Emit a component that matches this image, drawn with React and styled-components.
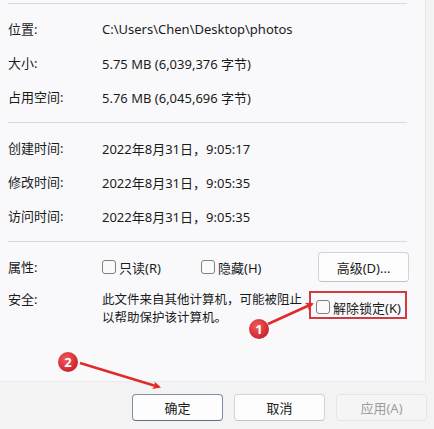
import styled, { createGlobalStyle } from "styled-components";

const Global = createGlobalStyle`
  html, body { margin: 0; padding: 0; }
  body {
    width: 434px;
    height: 429px;
    overflow: hidden;
    background: #f3f3f4;
    font-family: "Noto Sans", "Noto Sans CJK SC", sans-serif;
    font-size: 13px;
    color: #1b1b1b;
  }
`;

const info = [
  [["位置:", "C:\\Users\\Chen\\Desktop\\photos"], ["大小:", "5.75 MB (6,039,376 字节)"], ["占用空间:", "5.76 MB (6,045,696 字节)"]],
  [["创建时间:", "2022年8月31日，9:05:17"], ["修改时间:", "2022年8月31日，9:05:35"], ["访问时间:", "2022年8月31日，9:05:35"]],
];

export default function App() {
  return (
    <Page>
      <Global />
      <Panel>
        <Rule />
        {info.map((group, i) => (
          <div key={i}>
            <Section>
              {group.map(([k, v]) => (
                <Row key={k}>
                  <Label>{k}</Label>
                  <Value>{v}</Value>
                </Row>
              ))}
            </Section>
            <Rule />
          </div>
        ))}
        <Section>
          <Row>
            <Label>属性:</Label>
            <Attrs>
              <Check width="99px"><Box />只读(R)</Check>
              <Check><Box />隐藏(H)</Check>
              <Button wide>高级(D)...</Button>
            </Attrs>
          </Row>
          <Row top>
            <Label>安全:</Label>
            <Security>
              <Note>此文件来自其他计算机，可能被阻止<br />以帮助保护该计算机。</Note>
              <Highlight>
                <Check><Box />解除锁定(K)</Check>
              </Highlight>
            </Security>
          </Row>
        </Section>
      </Panel>
      <Footer>
        <Button primary>确定</Button>
        <Button>取消</Button>
        <Button disabled>应用(A)</Button>
      </Footer>
      <Marks viewBox="0 0 434 429">
        <defs>
          <radialGradient id="dot" cx="40%" cy="35%" r="70%">
            <stop offset="0" stopColor="#f25a5a" />
            <stop offset="1" stopColor="#c8202a" />
          </radialGradient>
          <marker id="head" markerWidth="8" markerHeight="8" refX="6" refY="4" orient="auto" markerUnits="userSpaceOnUse">
            <path d="M0 0 L8 4 L0 8 L2 4 Z" fill="#e02b2b" />
          </marker>
        </defs>
        <path d="M268 324 L312 304" stroke="#e02b2b" strokeWidth="2.5" fill="none" markerEnd="url(#head)" />
        <path d="M80 363 L159 387" stroke="#e02b2b" strokeWidth="2.5" fill="none" markerEnd="url(#head)" />
        <circle cx="259" cy="329" r="10" fill="url(#dot)" />
        <circle cx="68" cy="362" r="10" fill="url(#dot)" />
        <text x="259" y="334" textAnchor="middle" fill="#fff" fontSize="13" fontWeight="700" fontFamily="Noto Sans, sans-serif">1</text>
        <text x="68" y="367" textAnchor="middle" fill="#fff" fontSize="13" fontWeight="700" fontFamily="Noto Sans, sans-serif">2</text>
      </Marks>
    </Page>
  );
}

const Page = styled.div`
  position: relative;
  width: 434px;
  height: 429px;
  display: flex;
  flex-direction: column;
`;

const Panel = styled.div`
  width: 426px;
  height: 382px;
  box-sizing: border-box;
  padding: 3px 18px 0 8px;
  background: #f9f9fb;
  border-right: 1px solid #e8e8ea;
  border-bottom: 1px solid #ebebed;
`;

const Rule = styled.div`
  height: 1px;
  background: #d9d9db;
`;

const Section = styled.div`
  padding: 8px 0;
`;

const Row = styled.div`
  display: grid;
  grid-template-columns: 94px 1fr;
  align-items: ${(p) => (p.top ? "start" : "center")};
  min-height: 34px;
  padding-top: ${(p) => (p.top ? "6px" : "0")};
  box-sizing: border-box;
`;

const Label = styled.span`
  white-space: nowrap;
  line-height: 18px;
`;

const Value = styled.span`
  white-space: nowrap;
`;

const Attrs = styled.div`
  display: flex;
  align-items: center;
`;

const Check = styled.label`
  display: flex;
  align-items: center;
  gap: 3px;
  width: ${(p) => p.width || "auto"};
  white-space: nowrap;
`;

const Box = styled.span`
  width: 12px;
  height: 12px;
  border: 1px solid #808080;
  border-radius: 3px;
  background: #fbfbfb;
`;

const Security = styled.div`
  display: flex;
  align-items: flex-start;
  gap: 7px;
`;

const Note = styled.div`
  font-family: "Noto Sans CJK SC", sans-serif;
  font-size: 12.5px;
  line-height: 18px;
  white-space: nowrap;
`;

const Highlight = styled.div`
  margin-top: 1px;
  width: 98px;
  height: 28px;
  box-sizing: border-box;
  border: 2px solid #d23a40;
  display: flex;
  align-items: center;
  padding: 4px 0 0 5px;
`;

const Footer = styled.div`
  flex: 1;
  display: flex;
  justify-content: flex-end;
  align-items: flex-start;
  gap: 11px;
  padding: 12px 7px 0 0;
`;

const Button = styled.button`
  width: 91px;
  height: ${(p) => (p.wide ? "30px" : "27px")};
  margin-left: ${(p) => (p.wide ? "auto" : "0")};
  margin-right: ${(p) => (p.wide ? "-2px" : "0")};
  font: inherit;
  color: ${(p) => (p.disabled ? "#9d9d9d" : "#1b1b1b")};
  background: ${(p) => (p.disabled ? "#f5f5f6" : "#fdfdfd")};
  border: 1px solid ${(p) => (p.primary ? "#7d8fa3" : p.disabled ? "#e6e6e8" : "#d3d3d5")};
  border-bottom-color: ${(p) => (p.primary ? "#5d6f83" : p.disabled ? "#e6e6e8" : "#c2c2c4")};
  border-radius: 4px;
  padding: 0;
`;

const Marks = styled.svg`
  position: absolute;
  left: 0;
  top: 0;
  width: 434px;
  height: 429px;
  pointer-events: none;
`;
